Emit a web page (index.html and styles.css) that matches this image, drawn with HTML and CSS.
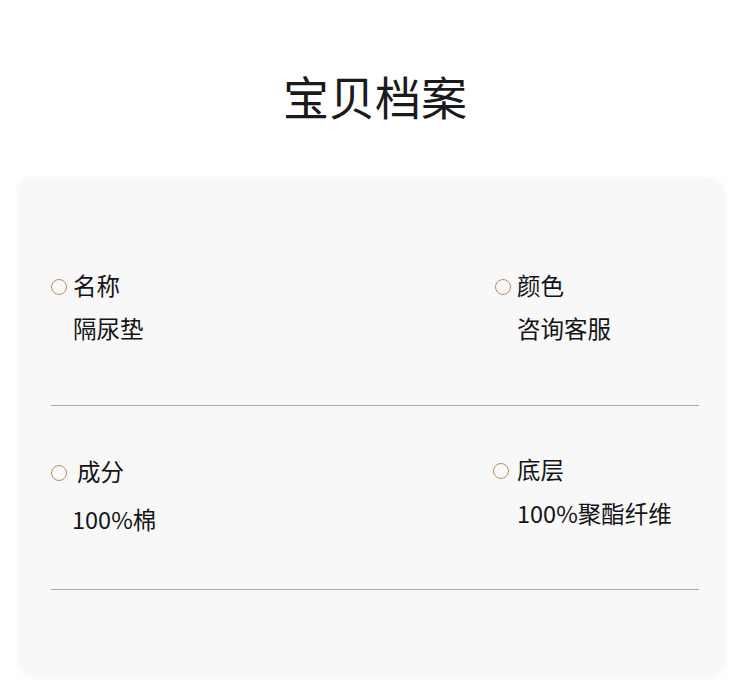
FILE: index.html
```html
<!DOCTYPE html>
<html lang="zh">
<head>
<meta charset="utf-8">
<link rel="stylesheet" href="styles.css">
</head>
<body>
<div class="page">
  <h1 class="title">宝贝档案</h1>
  <section class="card">
    <div class="row">
      <div class="item">
        <div class="label"><span class="dot"></span>名称</div>
        <div class="value">隔尿垫</div>
      </div>
      <div class="item">
        <div class="label"><span class="dot"></span>颜色</div>
        <div class="value">咨询客服</div>
      </div>
    </div>
    <div class="rule"></div>
    <div class="row row-2">
      <div class="item">
        <div class="label label-wide"><span class="dot"></span>成分</div>
        <div class="value value-wide">100%棉</div>
      </div>
      <div class="item item-up">
        <div class="label label-right"><span class="dot"></span>底层</div>
        <div class="value">100%聚酯纤维</div>
      </div>
    </div>
    <div class="rule"></div>
  </section>
</div>
</body>
</html>
```

FILE: styles.css
```css
html, body {
  margin: 0;
  padding: 0;
  background: #ffffff;
}
body {
  font-family: "Noto Sans CJK SC", "Noto Sans", sans-serif;
  color: #1a1a1a;
}
.page {
  width: 750px;
  height: 696px;
  display: flex;
  flex-direction: column;
  align-items: center;
}
.title {
  margin: 64px 0 0 0;
  height: 62px;
  line-height: 62px;
  font-size: 46px;
  font-weight: 400;
  color: #1a1a1a;
  letter-spacing: 0;
}
.card {
  box-sizing: border-box;
  margin: 52px 0 0 -7px;
  width: 707px;
  height: 499px;
  background: #f8f8f8;
  border-radius: 16px;
  box-shadow: 0 0 8px rgba(0, 0, 0, 0.035);
  padding: 91px 26px 0 33px;
  display: flex;
  flex-direction: column;
}
.row {
  display: grid;
  grid-template-columns: 444px 1fr;
}
.row-2 {
  margin-top: 49px;
}
.item {
  display: flex;
  flex-direction: column;
}
.item-up {
  margin-top: -2px;
}
.label {
  display: flex;
  align-items: center;
  height: 32px;
  line-height: 32px;
  font-size: 23.5px;
  color: #141414;
}
.dot {
  box-sizing: border-box;
  width: 16px;
  height: 16px;
  border: 1.6px solid #b98f64;
  border-radius: 50%;
  margin: 3px 6px 0 0;
  flex: none;
}
.label-wide .dot {
  margin-right: 10px;
}
.label-right .dot {
  margin-left: -2px;
  margin-right: 8px;
}
.value {
  margin: 11px 0 0 22px;
  height: 32px;
  line-height: 32px;
  font-size: 23.5px;
  color: #141414;
}
.value-wide {
  margin-top: 16px;
  margin-left: 21px;
}
.item-up .value {
  margin-top: 12px;
}
.rule {
  margin-top: 61px;
  height: 1px;
  background: #a8a8a8;
}
.row-2 + .rule {
  margin-top: 54px;
}
```
